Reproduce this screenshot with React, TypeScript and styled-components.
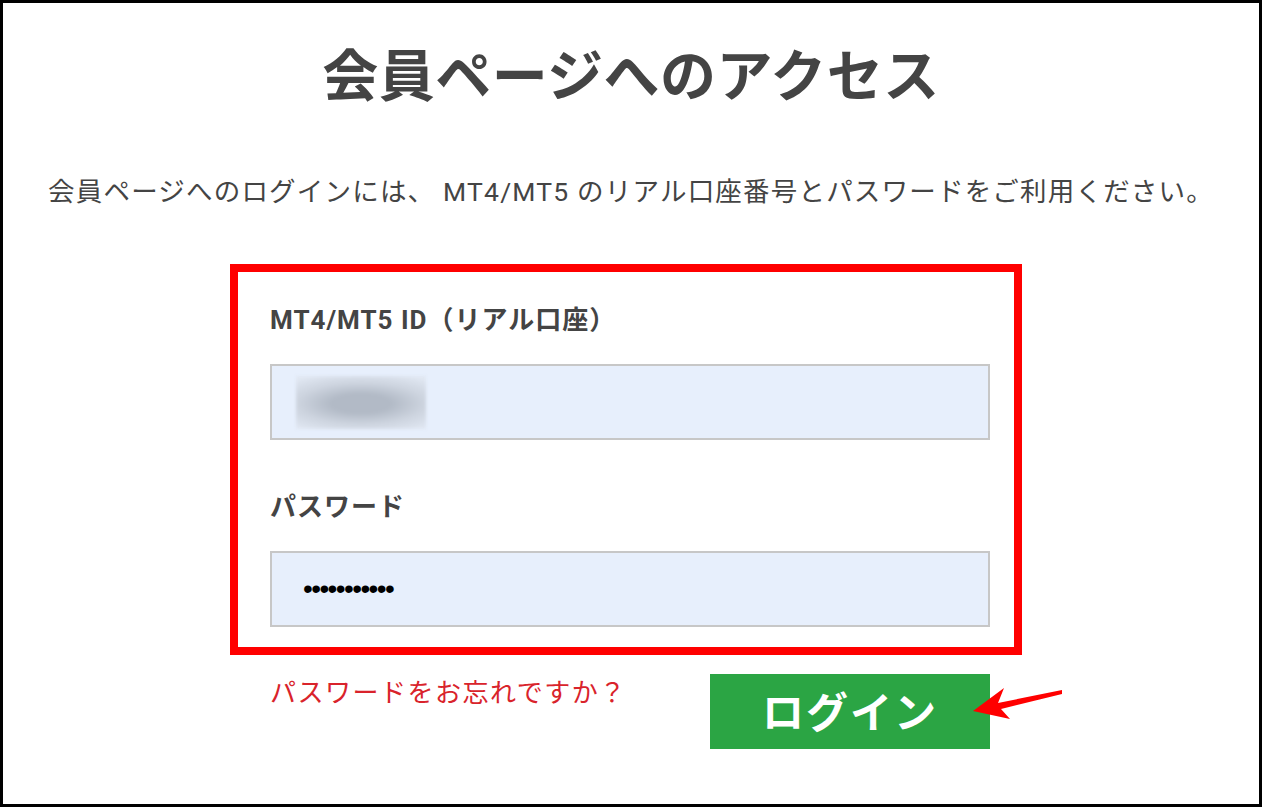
import styled, { createGlobalStyle } from 'styled-components';

const GlobalStyle = createGlobalStyle`
    html, body {
        margin : 0;
        padding : 0;
        background-color : #fff;
    }
    body {
        font-family : Roboto, "Noto Sans CJK JP", "Noto Sans", sans-serif;
    }
`;

const Frame = styled.div`
    box-sizing : border-box;
    width : 1262px;
    height : 807px;
    border : 3px solid #000;
    background-color : #fff;
    display : flex;
    flex-direction : column;
    align-items : center;
`;

const Title = styled.h1`
    margin : 46px 0 0;
    font-size : 56px;
    line-height : 56px;
    font-weight : 700;
    letter-spacing : 0.5px;
    color : #444;
`;

const Lead = styled.p`
    margin : 73px 0 0;
    font-size : 26.5px;
    line-height : 27px;
    font-weight : 400;
    letter-spacing : 1.2px;
    color : #444;
    white-space : nowrap;
`;

const Highlight = styled.div`
    align-self : flex-start;
    box-sizing : border-box;
    margin : 59px 0 0 227px;
    width : 792px;
    border : 8px solid #ff0000;
    padding : 35px 24px 20px 32px;
    display : flex;
    flex-direction : column;
`;

const Label = styled.label<{ $gap?: number }>`
    display : block;
    margin-top : ${({ $gap }) => $gap ?? 0}px;
    font-size : 26px;
    line-height : 26px;
    font-weight : 700;
    letter-spacing : 1px;
    color : #444;
`;

const Field = styled.div`
    box-sizing : border-box;
    margin-top : 31px;
    width : 720px;
    height : 76px;
    background-color : #e7effc;
    border : 2px solid #c7c7c7;
    display : flex;
    align-items : center;
    padding : 0 24px;
`;

const Masked = styled.span`
    display : block;
    width : 130px;
    height : 53px;
    background : radial-gradient(ellipse 75% 60% at 50% 52%, #b2bac6 30%, #cdd4df 65%, #e0e7f2 100%);
    filter : blur(1.5px);
`;

const Dots = styled.span`
    margin-left : 7px;
    font-family : "Liberation Sans", sans-serif;
    font-size : 28px;
    letter-spacing : -1.6px;
    color : #000;
`;

const Actions = styled.div`
    position : relative;
    align-self : flex-start;
    margin : 19px 0 0 267px;
    width : 720px;
    display : flex;
    justify-content : space-between;
    align-items : flex-start;
`;

const Forgot = styled.a`
    margin-top : 6px;
    font-size : 26px;
    line-height : 26px;
    letter-spacing : 1.5px;
    color : #d9232b;
    text-decoration : none;
`;

const LoginButton = styled.button`
    width : 280px;
    height : 75px;
    border : none;
    margin : 0;
    background-color : #2ba544;
    color : #fff;
    font-family : "Noto Sans CJK JP", sans-serif;
    font-size : 42px;
    font-weight : 700;
    letter-spacing : 2px;
    display : flex;
    align-items : center;
    justify-content : center;
    padding : 0 0 4px;
`;

const Arrow = styled.svg`
    position : absolute;
    left : 695px;
    top : 6px;
`;

const App = () => {
    return (
        <>
            <GlobalStyle />
            <Frame>
                <Title>会員ページへのアクセス</Title>
                <Lead>会員ページへのログインには、 MT4/MT5 のリアル口座番号とパスワードをご利用ください。</Lead>
                <Highlight>
                    <Label>MT4/MT5 ID（リアル口座）</Label>
                    <Field>
                        <Masked />
                    </Field>
                    <Label $gap={54}>パスワード</Label>
                    <Field>
                        <Dots>•••••••••••</Dots>
                    </Field>
                </Highlight>
                <Actions>
                    <Forgot href="#">パスワードをお忘れですか？</Forgot>
                    <LoginButton>ログイン</LoginButton>
                    <Arrow width="105" height="45" viewBox="0 0 105 45">
                        <polygon
                            points="8,31 39,8 33,23 97,10 97,14 36,29 45,39"
                            fill="#ff0000"
                        />
                    </Arrow>
                </Actions>
            </Frame>
        </>
    );
};

export default App;
